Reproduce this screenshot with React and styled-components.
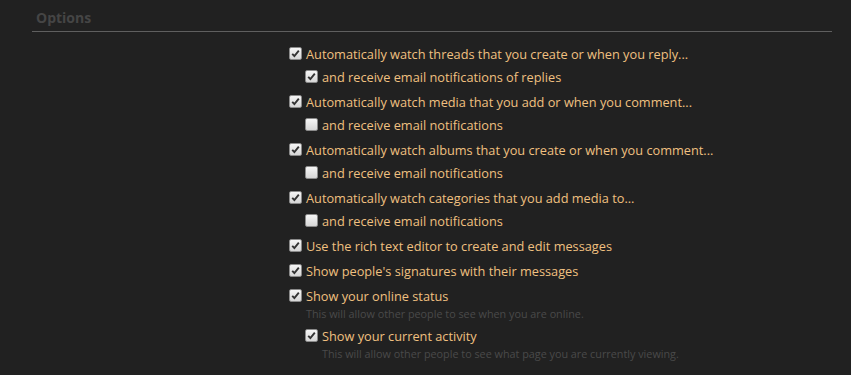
import React from "react";
import styled, { createGlobalStyle } from "styled-components";

const Global = createGlobalStyle`
  html, body { margin: 0; padding: 0; background: #212121; }
  body { font-family: "Open Sans", "Noto Sans", sans-serif; }
`;

const Page = styled.div`
  padding: 0 19px 0 32px;
  height: 375px;
  box-sizing: border-box;
  overflow: hidden;
`;

const Header = styled.h3`
  margin: 0;
  padding: 9px 4px 0;
  height: 22px;
  font-size: 14px;
  font-weight: 700;
  color: #454545;
  line-height: 18px;
  border-bottom: 1px solid #5f5f5f;
`;

const Form = styled.div`
  display: grid;
  grid-template-columns: 257px 1fr;
  padding-top: 10px;
`;

const List = styled.ul`
  list-style: none;
  margin: 0;
  padding: ${(p) => (p.$nested ? "0 0 0 16px" : "0")};
`;

const Item = styled.li`
  margin-bottom: 2px;
`;

const Row = styled.label`
  display: flex;
  align-items: center;
  height: 23px;
  gap: 4px;
  font-size: 12.75px;
  color: #f0c080;
  white-space: nowrap;
`;

const Box = styled.span`
  flex: none;
  width: 11px;
  height: 11px;
  margin-top: -1px;
  border: 1px solid #8a8a8a;
  border-radius: 2px;
  background: linear-gradient(#f5f5f5, #d6d6d6);
  display: flex;
  align-items: center;
  justify-content: center;
`;

const Hint = styled.div`
  font-size: 10.8px;
  line-height: 14px;
  color: #4a4a4a;
  padding-left: 17px;
  margin-bottom: 3px;
  white-space: nowrap;
`;

function Check({ checked }) {
  return (
    <Box>
      {checked && (
        <svg width="9" height="9" viewBox="0 0 9 9">
          <path d="M1.2 4.8 L3.4 7 L7.8 1.6" fill="none" stroke="#333" strokeWidth="1.9" />
        </svg>
      )}
    </Box>
  );
}

function Option({ label, checked, hint, children }) {
  return (
    <Item>
      <Row>
        <Check checked={checked} />
        <span>{label}</span>
      </Row>
      {hint && <Hint>{hint}</Hint>}
      {children && <List $nested>{children}</List>}
    </Item>
  );
}

const email = "and receive email notifications";

export default function App() {
  return (
    <>
      <Global />
      <Page>
        <Header>Options</Header>
        <Form>
          <div />
          <List>
            <Option checked label="Automatically watch threads that you create or when you reply...">
              <Option checked label="and receive email notifications of replies" />
            </Option>
            <Option checked label="Automatically watch media that you add or when you comment...">
              <Option label={email} />
            </Option>
            <Option checked label="Automatically watch albums that you create or when you comment...">
              <Option label={email} />
            </Option>
            <Option checked label="Automatically watch categories that you add media to...">
              <Option label={email} />
            </Option>
            <Option checked label="Use the rich text editor to create and edit messages" />
            <Option checked label="Show people's signatures with their messages" />
            <Option
              checked
              label="Show your online status"
              hint="This will allow other people to see when you are online."
            >
              <Option
                checked
                label="Show your current activity"
                hint="This will allow other people to see what page you are currently viewing."
              />
            </Option>
          </List>
        </Form>
      </Page>
    </>
  );
}
